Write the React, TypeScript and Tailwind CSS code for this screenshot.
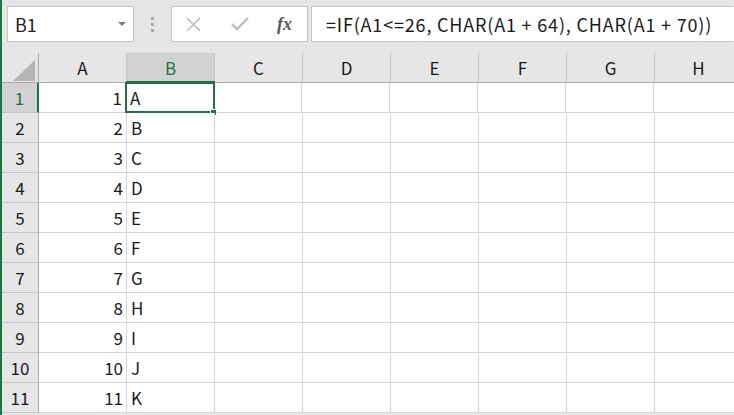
import React from "react";

const COLS = ["A", "B", "C", "D", "E", "F", "G", "H"];
const ROWS = ["A", "B", "C", "D", "E", "F", "G", "H", "I", "J", "K"];
const FONT = { fontFamily: '"Noto Sans CJK JP", "Liberation Sans", sans-serif' };

function NameBox() {
  return (
    <div className="flex h-[36px] w-[127px] items-center justify-between border border-[#c6c6c6] bg-white pl-[7px] pr-[7px]">
      <span className="text-[18px] leading-none text-[#222]">B1</span>
      <svg width="8" height="4" viewBox="0 0 8 4">
        <path d="M0 0h8L4 4z" fill="#7a7a7a" />
      </svg>
    </div>
  );
}

function FuncBox() {
  return (
    <div className="flex h-[36px] w-[137px] items-center border border-[#c6c6c6] bg-white">
      <svg className="ml-[13px]" width="17" height="17" viewBox="0 0 17 17">
        <path d="M2 2L15 15M15 2L2 15" stroke="#bdbdbd" strokeWidth="1.6" />
      </svg>
      <svg className="ml-[29px]" width="18" height="14" viewBox="0 0 18 14">
        <path d="M1 7l5 5L17 1" stroke="#bdbdbd" strokeWidth="2.4" fill="none" />
      </svg>
      <span
        className="ml-[28px] text-[18px] italic leading-none text-[#5a5a5a]"
        style={{ fontFamily: '"Liberation Serif", serif', fontWeight: 700 }}
      >
        fx
      </span>
    </div>
  );
}

export default function App() {
  return (
    <div
      className="flex h-[415px] w-[734px] flex-col overflow-hidden border-l-2 border-[#217346] bg-[#e6e6e6]"
      style={FONT}
    >
      {/* formula bar */}
      <div className="flex h-[53px] shrink-0 items-start pl-[5px] pt-[6px]">
        <NameBox />
        <div className="flex h-[36px] w-[37px] flex-col items-center justify-center gap-[3px]">
          <span className="h-[3px] w-[3px] bg-[#a8a8a8]" />
          <span className="h-[3px] w-[3px] bg-[#a8a8a8]" />
          <span className="h-[3px] w-[3px] bg-[#a8a8a8]" />
        </div>
        <FuncBox />
        <div className="ml-[3px] flex h-[36px] flex-1 items-center border border-y-[#c6c6c6] border-l-[#c6c6c6] border-r-transparent bg-white pl-[14px]">
          <span className="whitespace-nowrap text-[18px] leading-none tracking-[0.82px] text-[#1a1a1a]">
            =IF(A1&lt;=26, CHAR(A1 + 64), CHAR(A1 + 70))
          </span>
        </div>
      </div>

      {/* column header */}
      <div className="flex h-[30px] shrink-0 border-b border-[#ababab]">
        <div className="relative w-[37px] shrink-0 border-r border-[#ababab]">
          <svg className="absolute left-[11px] top-[7px]" width="22" height="21" viewBox="0 0 22 21">
            <path d="M22 0V21H0z" fill="#b4b4b4" />
          </svg>
        </div>
        {COLS.map((c) => (
          <div
            key={c}
            className={
              c === "B"
                ? "relative flex w-[88px] shrink-0 items-center justify-center border-r border-[#c6c6c6] bg-[#d2d2d2] text-[17px] text-[#217346]"
                : "flex w-[88px] shrink-0 items-center justify-center border-r border-[#c6c6c6] text-[17px] text-[#1a1a1a]"
            }
          >
            {c}
            {c === "B" && <span className="absolute -bottom-[1px] -left-[1px] h-[2px] w-[89px] bg-[#217346]" />}
          </div>
        ))}
      </div>

      {/* rows */}
      {ROWS.map((letter, i) => {
        const n = i + 1;
        const sel = n === 1;
        return (
          <div key={n} className="flex h-[30px] shrink-0">
            <div
              className={
                sel
                  ? "flex w-[37px] shrink-0 items-center justify-center border-b border-r-2 border-b-[#c6c6c6] border-r-[#217346] bg-[#d2d2d2] text-[17px] text-[#217346]"
                  : "flex w-[37px] shrink-0 items-center justify-center border-b border-r border-b-[#c6c6c6] border-r-[#ababab] text-[17px] text-[#1a1a1a]"
              }
            >
              {n}
            </div>
            <div
              className={
                sel
                  ? "flex w-[87px] shrink-0 items-center justify-end border-b border-r border-[#d4d4d4] bg-white pr-[3px] text-[17px] text-[#1a1a1a]"
                  : "flex w-[88px] shrink-0 items-center justify-end border-b border-r border-[#d4d4d4] bg-white pr-[3px] text-[17px] text-[#1a1a1a]"
              }
            >
              {n}
            </div>
            <div className="relative flex w-[88px] shrink-0 items-center border-b border-r border-[#d4d4d4] bg-white pl-[4px] text-[17px] text-[#1a1a1a]">
              {letter}
              {sel && (
                <>
                  <span className="absolute -left-[1px] -top-[1px] h-[31px] w-[90px] border-2 border-[#217346]" />
                  <span className="absolute -bottom-[4px] -right-[4px] h-[7px] w-[7px] border border-white bg-[#217346]" />
                </>
              )}
            </div>
            {COLS.slice(2).map((c) => (
              <div key={c} className="w-[88px] shrink-0 border-b border-r border-[#d4d4d4] bg-white" />
            ))}
          </div>
        );
      })}
    </div>
  );
}
